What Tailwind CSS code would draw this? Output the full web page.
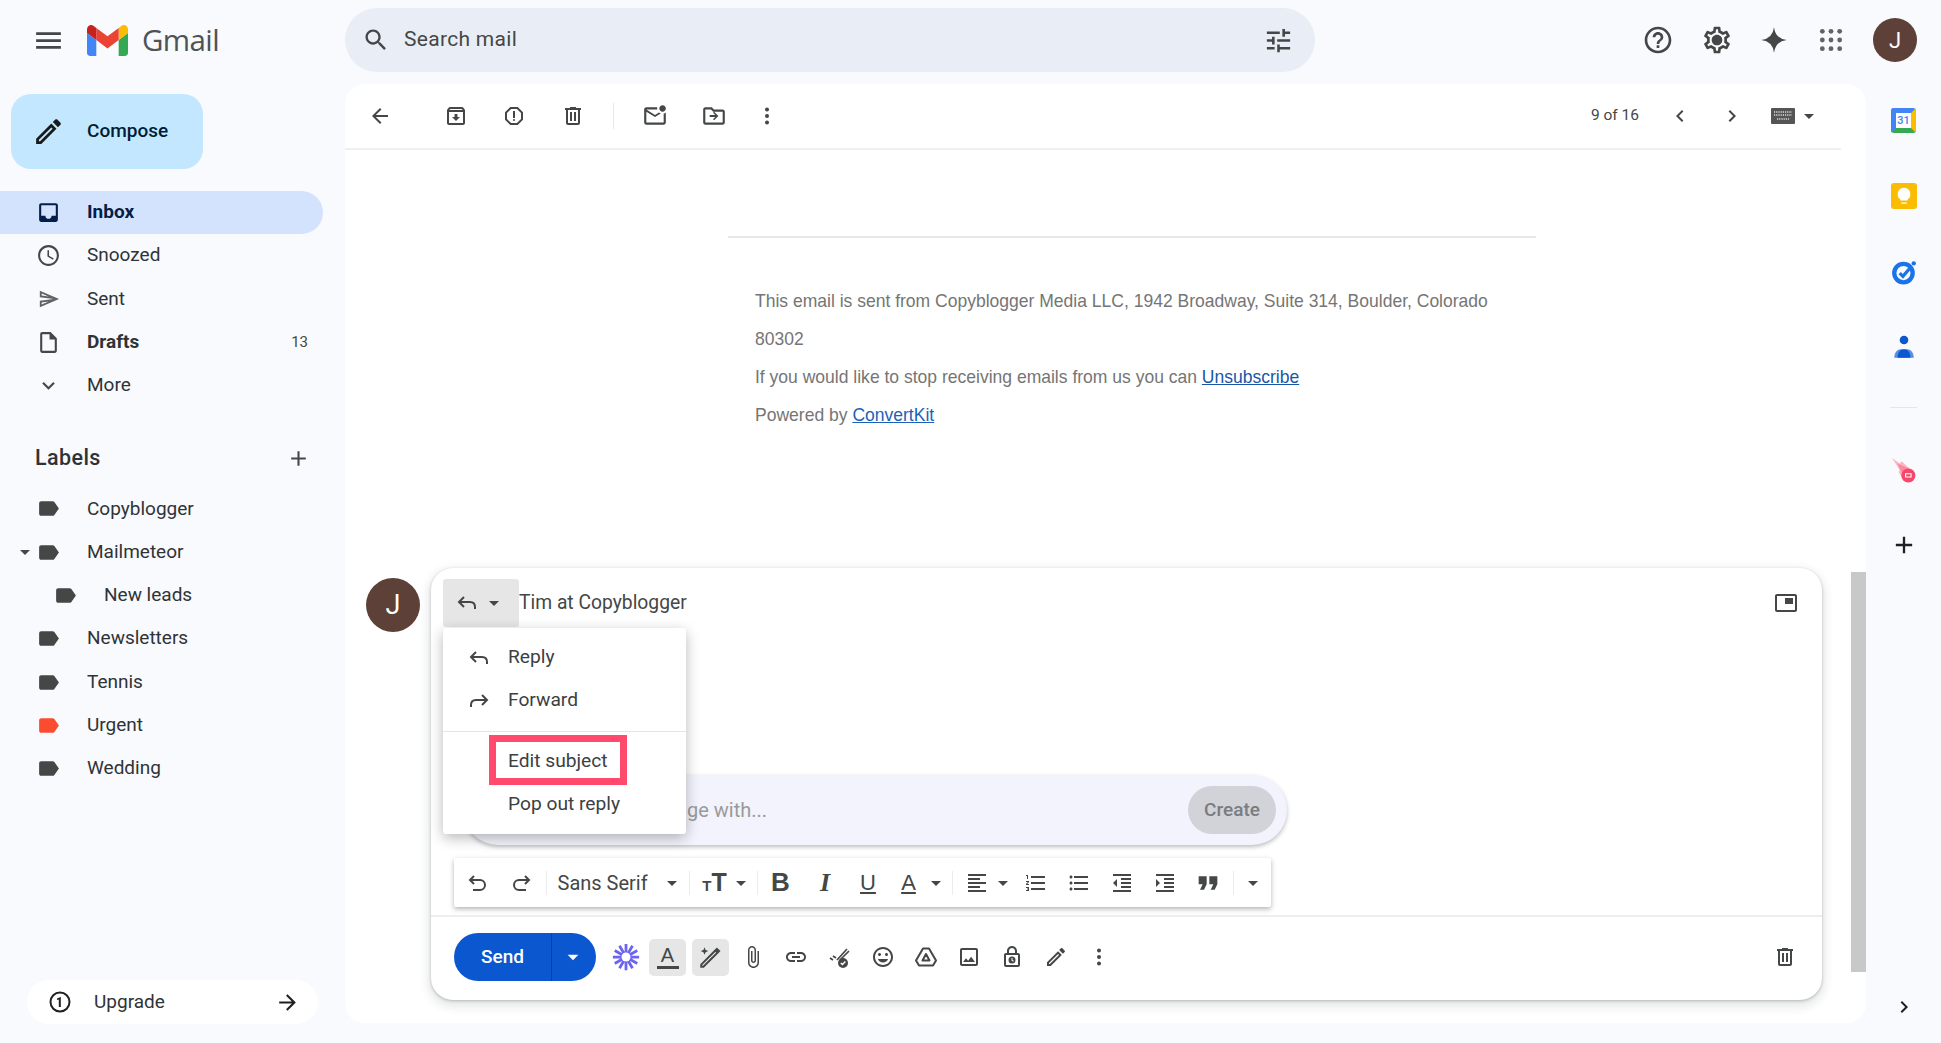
<!DOCTYPE html>
<html lang="en">
  <head>
    <meta charset="UTF-8" />
    <title>Gmail</title>
    <script src="https://cdn.jsdelivr.net/npm/@tailwindcss/browser@4"></script>
  </head>
  <body class="bg-[#f8fafd] h-[1043px] w-[1941px] overflow-hidden font-['Roboto',sans-serif] text-[#1f1f1f]">
    <!-- Top bar -->
    <header class="h-[84px] flex items-start">
      <div class="w-[345px] h-[80px] flex items-center">
        <svg viewBox="0 0 24 24" class="w-[33px] h-[33px] ml-[32px] fill-[#444746]"><path d="M3 18h18v-2H3v2zm0-5h18v-2H3v2zm0-7v2h18V6H3z"/></svg>
        <svg viewBox="52 42 88 66" class="w-[41px] h-[31px] ml-[22px]">
          <path fill="#4285f4" d="M58 108h14V74L52 59v43c0 3.32 2.69 6 6 6"/>
          <path fill="#34a853" d="M120 108h14c3.32 0 6-2.69 6-6V59l-20 15"/>
          <path fill="#fbbc04" d="M120 48v26l20-15v-8c0-7.42-8.47-11.65-14.4-7.2"/>
          <path fill="#ea4335" d="M72 74V48l24 18 24-18v26L96 92"/>
          <path fill="#c5221f" d="M52 51v8l20 15V48l-5.6-4.2c-5.94-4.45-14.4-.22-14.4 7.2"/>
        </svg>
        <span class="ml-[14px] text-[29.5px] text-[#4f5256] font-['Open_Sans',sans-serif] tracking-[-0.6px]">Gmail</span>
      </div>
      <!-- Search -->
      <div class="mt-[8px] w-[970px] h-[64px] bg-[#e9eef6] rounded-full flex items-center pl-[17px] pr-[21px]">
        <svg viewBox="0 0 24 24" class="w-[28px] h-[28px] fill-[#444746]"><path d="M15.5 14h-.79l-.28-.27C15.41 12.59 16 11.11 16 9.5 16 5.91 13.09 3 9.5 3S3 5.91 3 9.5 5.91 16 9.5 16c1.61 0 3.09-.59 4.23-1.57l.27.28v.79l5 4.99L20.49 19l-4.99-5zm-6 0C7.01 14 5 11.99 5 9.5S7.01 5 9.5 5 14 7.01 14 9.5 11.99 14 9.5 14z"/></svg>
        <span class="ml-[14px] text-[21px] text-[#444746] tracking-[0.3px]">Search mail</span>
        <svg viewBox="0 0 24 24" class="ml-auto w-[31px] h-[31px] fill-[#444746]"><path d="M3 17v2h6v-2H3zM3 5v2h10V5H3zm10 16v-2h8v-2h-8v-2h-2v6h2zM7 9v2H3v2h4v2h2V9H7zm14 4v-2H11v2h10zm-6-4h2V7h4V5h-4V3h-2v6z"/></svg>
      </div>
      <!-- Right icons -->
      <div class="h-[80px] flex items-center">
        <svg viewBox="0 0 24 24" class="ml-[327px] w-[32px] h-[32px] fill-[#444746]"><path d="M11 18h2v-2h-2v2zm1-16C6.48 2 2 6.48 2 12s4.48 10 10 10 10-4.48 10-10S17.52 2 12 2zm0 18c-4.41 0-8-3.59-8-8s3.59-8 8-8 8 3.59 8 8-3.59 8-8 8zm0-14c-2.21 0-4 1.79-4 4h2c0-1.1.9-2 2-2s2 .9 2 2c0 2-3 1.75-3 5h2c0-2.25 3-2.5 3-5 0-2.21-1.79-4-4-4z"/></svg>
        <svg viewBox="0 0 24 24" class="ml-[27px] w-[32px] h-[32px] fill-[#444746]"><path d="M19.43 12.98c.04-.32.07-.64.07-.98 0-.34-.03-.66-.07-.98l2.11-1.65c.19-.15.24-.42.12-.64l-2-3.46c-.09-.16-.26-.25-.44-.25-.06 0-.12.01-.17.03l-2.49 1c-.52-.4-1.08-.73-1.69-.98l-.38-2.65C14.46 2.18 14.25 2 14 2h-4c-.25 0-.46.18-.49.42l-.38 2.65c-.61.25-1.17.59-1.69.98l-2.49-1c-.06-.02-.12-.03-.18-.03-.17 0-.34.09-.43.25l-2 3.46c-.13.22-.07.49.12.64l2.11 1.65c-.04.32-.07.65-.07.98 0 .33.03.66.07.98l-2.11 1.65c-.19.15-.24.42-.12.64l2 3.46c.09.16.26.25.44.25.06 0 .12-.01.17-.03l2.49-1c.52.4 1.08.73 1.69.98l.38 2.65c.03.24.24.42.49.42h4c.25 0 .46-.18.49-.42l.38-2.65c.61-.25 1.17-.59 1.69-.98l2.49 1c.06.02.12.03.18.03.17 0 .34-.09.43-.25l2-3.46c.12-.22.07-.49-.12-.64l-2.11-1.65zm-1.98-1.71c.04.31.05.52.05.73 0 .21-.02.43-.05.73l-.14 1.13.89.7 1.08.84-.7 1.21-1.27-.51-1.04-.42-.9.68c-.43.32-.84.56-1.25.73l-1.06.43-.16 1.13-.2 1.35h-1.4l-.19-1.35-.16-1.13-1.06-.43c-.43-.18-.83-.41-1.23-.71l-.91-.7-1.06.43-1.27.51-.7-1.21 1.08-.84.89-.7-.14-1.13c-.03-.31-.05-.54-.05-.74s.02-.43.05-.73l.14-1.13-.89-.7-1.08-.84.7-1.21 1.27.51 1.04.42.9-.68c.43-.32.84-.56 1.25-.73l1.06-.43.16-1.13.2-1.35h1.39l.19 1.35.16 1.13 1.06.43c.43.18.83.41 1.23.71l.91.7 1.06-.43 1.27-.51.7 1.21-1.07.85-.89.7.14 1.13zM12 8c-2.21 0-4 1.79-4 4s1.79 4 4 4 4-1.79 4-4-1.79-4-4-4z"/></svg>
        <svg viewBox="0 0 24 24" class="ml-[25px] w-[32px] h-[32px] fill-[#444746]"><path d="M12 2.5Q13 11 21.5 12 13 13 12 21.5 11 13 2.5 12 11 11 12 2.5z"/></svg>
        <svg viewBox="0 0 24 24" class="ml-[25px] w-[32px] h-[32px] fill-[#5f6368]"><circle cx="5.5" cy="5.500" r="1.8"/><circle cx="12" cy="5.500" r="1.8"/><circle cx="18.5" cy="5.500" r="1.8"/><circle cx="5.5" cy="12" r="1.8"/><circle cx="12" cy="12" r="1.8"/><circle cx="18.5" cy="12" r="1.8"/><circle cx="5.5" cy="18.5" r="1.8"/><circle cx="12" cy="18.5" r="1.8"/><circle cx="18.5" cy="18.5" r="1.8"/></svg>
        <div class="ml-[26px] w-[44px] h-[44px] rounded-full bg-[#5d4037] text-white text-[22px] flex items-center justify-center">J</div>
      </div>
    </header>

    <div class="flex h-[959px]">
      <!-- Sidebar -->
      <aside class="w-[345px] h-full flex flex-col pb-[19px] text-[19px]">
        <button class="ml-[11px] mt-[10px] w-[192px] h-[75px] rounded-[20px] bg-[#c2e7ff] flex items-center pl-[20.5px] text-[#001d35] font-medium">
          <svg viewBox="0 0 24 24" class="w-[33px] h-[33px] fill-[#1a1a1a]"><path d="M3 17.25V21h3.75L17.81 9.94l-3.75-3.75L3 17.25zM5.92 19H5v-.92l9.06-9.06.92.92L5.92 19zM20.71 7.04c.39-.39.39-1.02 0-1.41l-2.34-2.34c-.2-.2-.45-.29-.71-.29s-.51.09-.7.29l-1.83 1.83 3.75 3.75 1.83-1.83z"/></svg>
          <span class="ml-[22.5px]">Compose</span>
        </button>
        <nav class="mt-[22px]">
          <a class="h-[43px] w-[323px] rounded-r-full bg-[#d3e3fd] flex items-center pl-[36px] font-bold text-[#041e49]">
            <svg viewBox="0 0 24 24" class="w-[25px] h-[25px] fill-[#041e49]"><path d="M19 3H4.99C3.88 3 3.01 3.89 3.01 5L3 19c0 1.1.88 2 1.99 2H19c1.1 0 2-.9 2-2V5c0-1.11-.9-2-2-2zm0 12h-4c0 1.66-1.35 3-3 3s-3-1.34-3-3H4.99V5H19v10z"/></svg>
            <span class="ml-[26px]">Inbox</span>
          </a>
          <a class="h-[43.3px] flex items-center pl-[36px] text-[#303336]">
            <svg viewBox="0 0 24 24" class="w-[25px] h-[25px] fill-[#444746]"><path d="M11.99 2C6.47 2 2 6.48 2 12s4.47 10 9.99 10C17.52 22 22 17.52 22 12S17.52 2 11.99 2zM12 20c-4.42 0-8-3.58-8-8s3.58-8 8-8 8 3.58 8 8-3.58 8-8 8zm.5-13H11v6l5.25 3.15.75-1.23-4.5-2.67z"/></svg>
            <span class="ml-[26px]">Snoozed</span>
          </a>
          <a class="h-[43.3px] flex items-center pl-[36px] text-[#303336]">
            <svg viewBox="0 0 24 24" class="mx-[1.5px] w-[22px] h-[22px] fill-[#5f6368]"><path d="M4.01 6.03l7.51 3.22-7.52-1 .01-2.22m7.5 8.72L4 17.97v-2.22l7.51-1M2.01 3L2 10l15 2-15 2 .01 7L23 12 2.01 3z"/></svg>
            <span class="ml-[26px]">Sent</span>
          </a>
          <a class="h-[43.3px] flex items-center pl-[36px] pr-[37px] font-bold text-[#303336]">
            <svg viewBox="0 0 24 24" class="w-[25px] h-[25px] fill-[#444746]"><path d="M14 2H6c-1.1 0-1.99.9-1.99 2L4 20c0 1.1.89 2 1.99 2H18c1.1 0 2-.9 2-2V8l-6-6zM6 20V4h7v5h5v11H6z"/></svg>
            <span class="ml-[26px]">Drafts</span>
            <span class="ml-auto text-[15px] font-normal text-[#444746]">13</span>
          </a>
          <a class="h-[43.3px] flex items-center pl-[36px] text-[#303336]">
            <svg viewBox="0 0 24 24" class="w-[25px] h-[25px] fill-[#444746]"><path d="M16.59 8.59L12 13.17 7.41 8.59 6 10l6 6 6-6z"/></svg>
            <span class="ml-[26px]">More</span>
          </a>
        </nav>

        <div class="mt-[36px] h-[30px] flex items-center pl-[35px] pr-[34px]">
          <span class="text-[21.5px] font-medium text-[#303336] tracking-[0.4px]">Labels</span>
          <svg viewBox="0 0 24 24" class="ml-auto w-[25px] h-[25px] fill-[#444746]"><path d="M19 13h-6v6h-2v-6H5v-2h6V5h2v6h6v2z"/></svg>
        </div>

        <ul class="mt-[14px] text-[#303336]">
          <li class="h-[43.3px] flex items-center pl-[36px]">
            <svg viewBox="0 0 24 24" class="w-[25px] h-[25px] fill-[#444746]"><path d="M17.63 5.84C17.27 5.33 16.67 5 16 5L5 5.01C3.9 5.01 3 5.9 3 7v10c0 1.1.9 1.99 2 1.99L16 19c.67 0 1.27-.33 1.63-.84L22 12l-4.37-6.16z"/></svg>
            <span class="ml-[26px]">Copyblogger</span>
          </li>
          <li class="h-[43.3px] flex items-center pl-[36px]">
            <svg viewBox="0 0 24 24" class="-ml-[23px] -mr-[1px] w-[24px] h-[24px] fill-[#444746]"><path d="M7 10l5 5 5-5z"/></svg>
            <svg viewBox="0 0 24 24" class="w-[25px] h-[25px] fill-[#444746]"><path d="M17.63 5.84C17.27 5.33 16.67 5 16 5L5 5.01C3.9 5.01 3 5.9 3 7v10c0 1.1.9 1.99 2 1.99L16 19c.67 0 1.27-.33 1.63-.84L22 12l-4.37-6.16z"/></svg>
            <span class="ml-[26px]">Mailmeteor</span>
          </li>
          <li class="h-[43.3px] flex items-center pl-[53px]">
            <svg viewBox="0 0 24 24" class="w-[25px] h-[25px] fill-[#444746]"><path d="M17.63 5.84C17.27 5.33 16.67 5 16 5L5 5.01C3.9 5.01 3 5.9 3 7v10c0 1.1.9 1.99 2 1.99L16 19c.67 0 1.27-.33 1.63-.84L22 12l-4.37-6.16z"/></svg>
            <span class="ml-[26px]">New leads</span>
          </li>
          <li class="h-[43.3px] flex items-center pl-[36px]">
            <svg viewBox="0 0 24 24" class="w-[25px] h-[25px] fill-[#444746]"><path d="M17.63 5.84C17.27 5.33 16.67 5 16 5L5 5.01C3.9 5.01 3 5.9 3 7v10c0 1.1.9 1.99 2 1.99L16 19c.67 0 1.27-.33 1.63-.84L22 12l-4.37-6.16z"/></svg>
            <span class="ml-[26px]">Newsletters</span>
          </li>
          <li class="h-[43.3px] flex items-center pl-[36px]">
            <svg viewBox="0 0 24 24" class="w-[25px] h-[25px] fill-[#444746]"><path d="M17.63 5.84C17.27 5.33 16.67 5 16 5L5 5.01C3.9 5.01 3 5.9 3 7v10c0 1.1.9 1.99 2 1.99L16 19c.67 0 1.27-.33 1.63-.84L22 12l-4.37-6.16z"/></svg>
            <span class="ml-[26px]">Tennis</span>
          </li>
          <li class="h-[43.3px] flex items-center pl-[36px]">
            <svg viewBox="0 0 24 24" class="w-[25px] h-[25px] fill-[#fb4c2f]"><path d="M17.63 5.84C17.27 5.33 16.67 5 16 5L5 5.01C3.9 5.01 3 5.9 3 7v10c0 1.1.9 1.99 2 1.99L16 19c.67 0 1.27-.33 1.63-.84L22 12l-4.37-6.16z"/></svg>
            <span class="ml-[26px]">Urgent</span>
          </li>
          <li class="h-[43.3px] flex items-center pl-[36px]">
            <svg viewBox="0 0 24 24" class="w-[25px] h-[25px] fill-[#444746]"><path d="M17.63 5.84C17.27 5.33 16.67 5 16 5L5 5.01C3.9 5.01 3 5.9 3 7v10c0 1.1.9 1.99 2 1.99L16 19c.67 0 1.27-.33 1.63-.84L22 12l-4.37-6.16z"/></svg>
            <span class="ml-[26px]">Wedding</span>
          </li>
        </ul>

        <div class="mt-auto ml-[27px] w-[291px] h-[44px] rounded-full bg-white flex items-center pl-[21px] pr-[18px] text-[#303336]">
          <svg viewBox="0 0 24 24" class="w-[24px] h-[24px]"><circle cx="12" cy="12" r="9.500" fill="none" stroke="#1f1f1f" stroke-width="2"/><path d="M12.800 7v10h-2v-7.600l-1.800.6V8.400L12.600 7z" fill="#1f1f1f"/></svg>
          <span class="ml-[22px]">Upgrade</span>
          <svg viewBox="0 0 24 24" class="ml-auto w-[25px] h-[25px] fill-[#1f1f1f]"><path d="M12 4l-1.41 1.41L16.17 11H4v2h12.17l-5.58 5.59L12 20l8-8z"/></svg>
        </div>
      </aside>

      <!-- Main card -->
      <main class="relative w-[1521px] h-[939px] bg-white rounded-[20px] overflow-hidden">
        <div class="h-[66px] mr-[25px] border-b-2 border-[#f0f0f0] flex items-center text-[15.5px] text-[#444746]">
          <svg viewBox="0 0 24 24" class="ml-[23px] w-[24px] h-[24px] fill-[#444746]"><path d="M20 11H7.83l5.59-5.59L12 4l-8 8 8 8 1.41-1.41L7.83 13H20v-2z"/></svg>
          <svg viewBox="0 0 24 24" class="ml-[52px] w-[24px] h-[24px] fill-[#444746]"><path d="M20.54 5.23l-1.39-1.68C18.88 3.21 18.47 3 18 3H6c-.47 0-.88.21-1.16.55L3.46 5.23C3.17 5.57 3 6.02 3 6.5V19c0 1.1.9 2 2 2h14c1.1 0 2-.9 2-2V6.5c0-.48-.17-.93-.46-1.27zM6.24 5h11.52l.81.97H5.44l.8-.97zM5 19V8h14v11H5zm8.45-9h-2.9v3H8l4 4 4-4h-2.55z"/></svg>
          <svg viewBox="0 0 24 24" class="ml-[34px] w-[24px] h-[24px] fill-[#444746]"><path d="M15.73 3H8.27L3 8.27v7.46L8.27 21h7.46L21 15.73V8.27L15.73 3zM19 14.9L14.9 19H9.1L5 14.9V9.1L9.1 5h5.8L19 9.1v5.8z"/><circle cx="12" cy="16" r="1"/><rect x="11" y="7" width="2" height="7"/></svg>
          <svg viewBox="0 0 24 24" class="ml-[35px] w-[24px] h-[24px] fill-[#444746]"><path d="M15 4V3H9v1H4v2h1v13c0 1.1.9 2 2 2h10c1.1 0 2-.9 2-2V6h1V4h-5zm2 15H7V6h10v13zM9 8h2v9H9zm4 0h2v9h-2z"/></svg>
          <div class="ml-[28px] w-px h-[26px] bg-[#e8e8e8]"></div>
          <svg viewBox="0 0 24 24" class="ml-[28px] w-[26px] h-[26px] fill-[#444746]"><path d="M22 8.98V18c0 1.1-.9 2-2 2H4c-1.1 0-2-.9-2-2V6c0-1.1.9-2 2-2h10.1c-.06.32-.1.66-.1 1 0 .34.04.68.1 1H4l8 5 3.67-2.29c.47.43 1.02.76 1.63.98L12 13 4 8v10h16V9.9c.74-.15 1.42-.48 2-.92zM16 5c0 1.66 1.34 3 3 3s3-1.34 3-3-1.34-3-3-3-3 1.34-3 3z"/></svg>
          <svg viewBox="0 0 24 24" class="ml-[33px] w-[26px] h-[26px] fill-[#444746]"><path d="M20 6h-8l-2-2H4c-1.1 0-1.99.9-1.99 2L2 18c0 1.1.9 2 2 2h16c1.1 0 2-.9 2-2V8c0-1.1-.9-2-2-2zm0 12H4V6h5.17l2 2H20v10zm-7.84-2L16 12l-3.84-4-1.06 1.06L13.17 11H8v2h5.17l-2.07 1.94z"/></svg>
          <svg viewBox="0 0 24 24" class="ml-[28px] w-[24px] h-[24px] fill-[#444746]"><circle cx="12" cy="5.500" r="2"/><circle cx="12" cy="12" r="2"/><circle cx="12" cy="18.500" r="2"/></svg>
          <span class="ml-auto">9 of 16</span>
          <svg viewBox="0 0 24 24" class="ml-[29px] w-[24px] h-[24px] fill-[#444746]"><path d="M15.41 7.41 14 6l-6 6 6 6 1.41-1.41L10.83 12z"/></svg>
          <svg viewBox="0 0 24 24" class="ml-[28px] w-[24px] h-[24px] fill-[#444746]"><path d="M10 6 8.59 7.41 13.17 12l-4.58 4.59L10 18l6-6z"/></svg>
          <svg viewBox="0 0 26 16" class="ml-[26px] w-[26px] h-[16px]"><rect width="24" height="16" rx="1" x="1" fill="#555"/><path d="M4 4h18M4 7h18M7 11h12" stroke="#ddd" stroke-width="1.4" stroke-dasharray="1.2 1"/></svg>
          <svg viewBox="0 0 24 24" class="ml-[1px] mr-[20px] w-[24px] h-[24px] fill-[#444746]"><path d="M7 10l5 5 5-5z"/></svg>
        </div>

        <!-- Mail footer -->
        <div class="h-[418px] font-['Liberation_Sans',sans-serif] text-[17.52px] text-[#757575]">
          <div class="ml-[383px] w-[808px] pt-[86px] border-b-2 border-[#e8e8e8]"></div>
          <div class="ml-[410px] pt-[44px] leading-[38px]">
            <p>This email is sent from Copyblogger Media LLC, 1942 Broadway, Suite 314, Boulder, Colorado</p>
            <p>80302</p>
            <p>If you would like to stop receiving emails from us you can <a class="text-[#1a56a8] underline">Unsubscribe</a></p>
            <p>Powered by <a class="text-[#1a62b8] underline">ConvertKit</a></p>
          </div>
        </div>

        <!-- Reply -->
        <div class="flex items-start pl-[21px]">
          <div class="mt-[10px] w-[54px] h-[54px] rounded-full bg-[#5d4037] text-white text-[27px] flex items-center justify-center">J</div>
          <div class="relative ml-[11px] w-[1391px] h-[432px] bg-white rounded-[22px] shadow-[0_1px_3px_rgba(60,64,67,0.3),0_4px_10px_3px_rgba(60,64,67,0.12)] flex flex-col">
            <div class="h-[349px] border-b-2 border-[#eeeeee]">
              <div class="flex items-start pl-[12px] pr-[24px] pt-[11px] h-[59px]">
                <div class="w-[76px] h-[48px] bg-[#e6e6e6] rounded-[3px] flex items-center pl-[12px]">
                  <svg viewBox="0 0 24 24" class="w-[24px] h-[24px] fill-none stroke-[#444746] stroke-2"><path d="M9 6 4 11l5 5M4 11h11q5 0 5 5v2"/></svg>
                  <svg viewBox="0 0 24 24" class="w-[24px] h-[24px] ml-[3px] fill-[#444746]"><path d="M7 10l5 5 5-5z"/></svg>
                </div>
                <span class="h-[48px] leading-[48px] text-[19.3px] text-[#444746]">Tim at Copyblogger</span>
                <svg viewBox="0 0 24 24" class="ml-auto w-[24px] h-[48px] fill-[#444746]"><path d="M19 7h-8v6h8V7zm2-4H3c-1.1 0-2 .9-2 2v14c0 1.1.9 2 2 2h18c1.1 0 2-.9 2-2V5c0-1.1-.9-2-2-2zm0 16.01H3V4.98h18v14.03z"/></svg>
              </div>

              <!-- Prompt bar -->
              <div class="mt-[148px] ml-[32px] w-[824px] h-[70px] rounded-[35px] bg-[#f2f3fc] shadow-[0_2px_4px_rgba(60,64,67,0.35)] flex items-center pr-[11px] text-[20px] text-[#9a9a9a]">
                <span class="pl-[224px]">ge with...</span>
                <button class="ml-auto w-[88px] h-[48px] rounded-full bg-[#d1d3d9] text-[19px] font-medium text-[#7a7c80]">Create</button>
              </div>

              <!-- Format toolbar -->
              <div class="mt-[13px] ml-[23px] w-[817px] h-[49px] bg-white rounded-[2px] shadow-[0_2px_5px_rgba(60,64,67,0.4)] flex items-center text-[#444746]">
                <svg viewBox="0 0 24 24" class="ml-[11px] mr-[9.5px] w-[24px] h-[24px] fill-none stroke-[#444746] stroke-2"><path d="M9 5 5 9l4 4M5 9h10a5 5 0 0 1 0 10H8"/></svg>
                <svg viewBox="0 0 24 24" class="ml-[11px] mr-[9px] w-[24px] h-[24px] fill-none stroke-[#444746] stroke-2"><path d="m15 5 4 4-4 4m4-4H9a5 5 0 0 0 0 10h7"/></svg>
                <div class="ml-[3px] w-px h-[24px] bg-[#ececec]"></div>
                <span class="ml-[11px] w-[102px] text-[20px]">Sans Serif</span>
                <svg viewBox="0 0 24 24" class="w-[24px] h-[24px] fill-[#444746]"><path d="M7 10l5 5 5-5z"/></svg>
                <div class="ml-[5px] w-px h-[24px] bg-[#ececec]"></div>
                <span class="w-[38px] ml-[6px] text-center font-bold font-['Liberation_Sans',sans-serif] text-[25px] leading-none"><span class="text-[15px]">T</span>T</span>
                <svg viewBox="0 0 24 24" class="-ml-[5px] -mr-[5px] w-[24px] h-[24px] fill-[#444746]"><path d="M7 10l5 5 5-5z"/></svg>
                <div class="ml-[9px] w-px h-[24px] bg-[#ececec]"></div>
                <span class="w-[46px] text-center font-bold font-['Liberation_Sans',sans-serif] text-[26px]">B</span>
                <span class="w-[43px] text-center italic font-bold font-['Liberation_Serif',serif] text-[26px]">I</span>
                <span class="w-[43px] text-center font-['Liberation_Sans',sans-serif] text-[22px] underline underline-offset-2 decoration-2">U</span>
                <span class="w-[38px] text-center font-['Liberation_Sans',sans-serif] text-[22px] underline underline-offset-2 decoration-2">A</span>
                <svg viewBox="0 0 24 24" class="-mx-[4px] w-[24px] h-[24px] fill-[#444746]"><path d="M7 10l5 5 5-5z"/></svg>
                <div class="ml-[8px] w-px h-[24px] bg-[#ececec]"></div>
                <svg viewBox="0 0 24 24" class="ml-[12px] mr-[6px] w-[24px] h-[24px] fill-[#444746]"><path d="M15 15H3v2h12v-2zm0-8H3v2h12V7zM3 13h18v-2H3v2zm0 8h18v-2H3v2zM3 3v2h18V3H3z"/></svg>
                <svg viewBox="0 0 24 24" class="-mx-[4px] w-[24px] h-[24px] fill-[#444746]"><path d="M7 10l5 5 5-5z"/></svg>
                <svg viewBox="0 0 24 24" class="ml-[13.5px] mr-[9.5px] w-[24px] h-[24px] fill-[#444746]"><path d="M2 17h2v.5H3v1h1v.5H2v1h3v-4H2v1zm1-9h1V4H2v1h1v3zm-1 3h1.8L2 13.1v.9h3v-1H3.2L5 10.9V10H2v1zm5-6v2h14V5H7zm0 14h14v-2H7v2zm0-6h14v-2H7v2z"/></svg>
                <svg viewBox="0 0 24 24" class="mx-[9.5px] w-[24px] h-[24px] fill-[#444746]"><path d="M4 10.5c-.83 0-1.5.67-1.5 1.5s.67 1.5 1.5 1.5 1.5-.67 1.5-1.5-.67-1.5-1.5-1.5zm0-6c-.83 0-1.5.67-1.5 1.5S3.17 7.5 4 7.5 5.5 6.83 5.5 6 4.83 4.5 4 4.5zm0 12c-.83 0-1.5.68-1.5 1.5s.68 1.5 1.5 1.5 1.5-.68 1.5-1.5-.67-1.5-1.5-1.5zM7 19h14v-2H7v2zm0-6h14v-2H7v2zm0-8v2h14V5H7z"/></svg>
                <svg viewBox="0 0 24 24" class="mx-[9.5px] w-[24px] h-[24px] fill-[#444746]"><path d="M11 17h10v-2H11v2zm-8-5l4 4V8l-4 4zm0 9h18v-2H3v2zM3 3v2h18V3H3zm8 6h10V7H11v2zm0 4h10v-2H11v2z"/></svg>
                <svg viewBox="0 0 24 24" class="mx-[9.5px] w-[24px] h-[24px] fill-[#444746]"><path d="M3 21h18v-2H3v2zM3 8v8l4-4-4-4zm8 9h10v-2H11v2zM3 3v2h18V3H3zm8 6h10V7H11v2zm0 4h10v-2H11v2z"/></svg>
                <svg viewBox="0 0 24 24" class="mx-[5.5px] w-[32px] h-[32px] fill-[#444746]"><path d="M6 17h3l2-4V7H5v6h3zm8 0h3l2-4V7h-6v6h3z"/></svg>
                <div class="ml-[3px] w-px h-[24px] bg-[#ececec]"></div>
                <svg viewBox="0 0 24 24" class="ml-[7px] w-[24px] h-[24px] fill-[#444746]"><path d="M7 10l5 5 5-5z"/></svg>
              </div>
            </div>

            <!-- Send row -->
            <div class="flex-1 flex items-center pl-[23px] pr-[25px] pb-[3px]">
              <div class="w-[142px] h-[48px] rounded-full bg-[#0b57d0] flex items-center text-white">
                <span class="w-[97px] text-center text-[19px] font-medium">Send</span>
                <div class="w-px h-[48px] bg-[#0842a0]"></div>
                <svg viewBox="0 0 24 24" class="ml-[8px] w-[26px] h-[26px] fill-white"><path d="M7 10l5 5 5-5z"/></svg>
              </div>
              <svg viewBox="0 0 24 24" class="ml-[15px] w-[30px] h-[30px] stroke-[#6c63f0] stroke-[2.2]"><path d="M12 1.500v21M1.500 12h21M3 6.800l18 10.400M3 17.200 21 6.800M6.800 3l10.400 18M17.200 3 6.800 21"/><circle cx="12" cy="12" r="3.600" fill="#fff" stroke="none"/></svg>
              <div class="ml-[8px] w-[37px] h-[37px] rounded-[5px] bg-[#e6e6e6] flex flex-col items-center justify-center">
                <span class="font-['Liberation_Sans',sans-serif] text-[20px] leading-[21px] text-[#444746]">A</span>
                <div class="w-[22px] h-[3px] bg-[#444746]"></div>
              </div>
              <div class="ml-[6px] w-[37px] h-[37px] rounded-[5px] bg-[#e6e6e6] flex items-center justify-center">
                <svg viewBox="0 0 24 24" class="w-[26px] h-[26px]"><path d="M5 21 3 21 3 19 16 6 18 8zM17.500 4.500l2 2-1 1-2-2z" fill="none" stroke="#444746" stroke-width="1.800"/><path d="M6 3l1 2.500L9.500 6.500 7 7.500 6 10 5 7.500 2.500 6.500 5 5.500z" fill="#444746"/></svg>
              </div>
              <svg viewBox="0 0 24 24" class="ml-[12px] mr-[9.8px] w-[24px] h-[24px] fill-[#444746]"><path d="M16.500 6v11.500c0 2.210-1.790 4-4 4s-4-1.790-4-4V5c0-1.380 1.120-2.500 2.500-2.500s2.500 1.120 2.500 2.500v10.500c0 .55-.45 1-1 1s-1-.45-1-1V6H10v9.500c0 1.380 1.120 2.500 2.500 2.500s2.500-1.120 2.500-2.500V5c0-2.210-1.790-4-4-4S7 2.790 7 5v12.500c0 3.040 2.460 5.500 5.500 5.500s5.500-2.460 5.500-5.500V6h-1.500z"/></svg>
              <svg viewBox="0 0 24 24" class="mx-[9.6px] w-[24px] h-[24px] fill-[#444746]"><path d="M3.900 12c0-1.710 1.390-3.100 3.100-3.100h4V7H7c-2.760 0-5 2.240-5 5s2.240 5 5 5h4v-1.900H7c-1.710 0-3.100-1.390-3.100-3.100zM8 13h8v-2H8v2zm9-6h-4v1.900h4c1.710 0 3.100 1.390 3.100 3.100s-1.390 3.100-3.100 3.100h-4V17h4c2.760 0 5-2.240 5-5s-2.240-5-5-5z"/></svg>
              <svg viewBox="0 0 24 24" class="mx-[9.6px] w-[24px] h-[24px]"><path d="M2 13l3 2M5 11l3 2M9 15l10-11M12 15l9-9" fill="none" stroke="#444746" stroke-width="1.700"/><circle cx="15" cy="18" r="5" fill="#444746"/><path d="M12.800 18l1.600 1.600 3-3" fill="none" stroke="#fff" stroke-width="1.400"/></svg>
              <svg viewBox="0 0 24 24" class="mx-[9.6px] w-[24px] h-[24px] fill-[#444746]"><path d="M11.990 2C6.470 2 2 6.480 2 12s4.470 10 9.990 10C17.520 22 22 17.520 22 12S17.520 2 11.990 2zM12 20c-4.420 0-8-3.580-8-8s3.580-8 8-8 8 3.580 8 8-3.580 8-8 8zm3.500-9c.83 0 1.500-.67 1.500-1.500S16.330 8 15.500 8 14 8.670 14 9.500s.67 1.500 1.500 1.500zm-7 0c.83 0 1.500-.67 1.500-1.500S9.330 8 8.500 8 7 8.670 7 9.500 7.670 11 8.500 11zm3.500 6.500c2.330 0 4.310-1.460 5.110-3.500H6.890c.8 2.040 2.780 3.500 5.110 3.500z"/></svg>
              <svg viewBox="0 0 24 24" class="mx-[9.6px] w-[24px] h-[24px] fill-none stroke-[#444746] stroke-2 [stroke-linejoin:round]"><path d="M9 3.500h6L22 15.500l-3 5H5l-3-5zM12 9l-3.500 6.500h7z"/></svg>
              <svg viewBox="0 0 24 24" class="mx-[9.6px] w-[24px] h-[24px] fill-[#444746]"><path d="M19 5v14H5V5h14m0-2H5c-1.100 0-2 .9-2 2v14c0 1.100.9 2 2 2h14c1.100 0 2-.9 2-2V5c0-1.100-.9-2-2-2zm-4.860 8.860l-3 3.870L9 13.140 6 17h12l-3.860-5.140z"/></svg>
              <svg viewBox="0 0 24 24" class="mx-[9.6px] w-[24px] h-[24px] fill-[#444746]"><path d="M18 8h-1V6c0-2.760-2.240-5-5-5S7 3.240 7 6v2H6c-1.100 0-2 .9-2 2v10c0 1.100.9 2 2 2h12c1.100 0 2-.9 2-2V10c0-1.100-.9-2-2-2zM9 6c0-1.660 1.340-3 3-3s3 1.340 3 3v2H9V6zm9 14H6V10h12v10z"/><path d="M12 11.500a3.500 3.500 0 1 0 0 7 3.500 3.500 0 0 0 0-7zm1.300 5.200-1.800-1.100V13h1v2l1.300.8z"/></svg>
              <svg viewBox="0 0 24 24" class="mx-[9.6px] w-[24px] h-[24px] fill-[#444746]"><path d="M3 17.250V21h3.750L17.810 9.940l-3.750-3.750L3 17.250zM5.920 19H5v-.92l9.060-9.060.92.92L5.920 19zM20.710 7.040c.39-.39.39-1.020 0-1.410l-2.340-2.340c-.2-.2-.45-.29-.71-.29s-.51.09-.7.29l-1.830 1.830 3.750 3.750 1.830-1.830z"/></svg>
              <svg viewBox="0 0 24 24" class="mx-[9.6px] w-[24px] h-[24px] fill-[#444746]"><circle cx="12" cy="5.500" r="2"/><circle cx="12" cy="12" r="2"/><circle cx="12" cy="18.500" r="2"/></svg>
              <svg viewBox="0 0 24 24" class="ml-auto w-[24px] h-[24px] fill-[#444746]"><path d="M15 4V3H9v1H4v2h1v13c0 1.100.9 2 2 2h10c1.100 0 2-.9 2-2V6h1V4h-5zm2 15H7V6h10v13zM9 8h2v9H9zm4 0h2v9h-2z"/></svg>
            </div>

            <!-- Reply type menu -->
            <div class="absolute z-10 left-[12px] top-[60px] w-[243px] h-[206px] bg-white rounded-[3px] shadow-[0_4px_14px_rgba(0,0,0,0.28)] pt-[8px] text-[19.2px] text-[#3c4043]">
              <div class="h-[43px] flex items-center pl-[24px]">
                <svg viewBox="0 0 24 24" class="w-[24px] h-[24px] fill-none stroke-[#444746] stroke-2"><path d="M9 6 4 11l5 5M4 11h11q5 0 5 5v2"/></svg>
                <span class="ml-[17px]">Reply</span>
              </div>
              <div class="h-[43px] flex items-center pl-[24px]">
                <svg viewBox="0 0 24 24" class="w-[24px] h-[24px] fill-none stroke-[#444746] stroke-2"><path d="m15 6 5 5-5 5m5-5H9q-5 0-5 5v2"/></svg>
                <span class="ml-[17px]">Forward</span>
              </div>
              <div class="mt-[9px] border-t border-[#e4e4e4]"></div>
              <div class="relative mt-[8px] h-[43px] flex items-center pl-[65px]">
                <span>Edit subject</span>
                <div class="absolute left-[46px] -top-[5px] w-[138px] h-[50px] border-[7px] border-[#ff4a6e]"></div>
              </div>
              <div class="h-[43px] flex items-center pl-[65px]">Pop out reply</div>
            </div>
          </div>
        </div>

        <!-- Scrollbar -->
        <div class="absolute right-0 top-[488px] w-[15px] h-[400px] bg-[#c8c8c8]"></div>
      </main>

      <!-- Right rail -->
      <aside class="flex-1 h-full flex flex-col items-center pt-[24px] pb-[24px]">
        <div class="relative w-[25px] h-[25px] rounded-[3px] bg-white border-[5px] border-t-[#4285f4] border-l-[#4285f4] border-r-[#fbbc04] border-b-[#34a853] flex items-center justify-center">
          <span class="text-[11px] font-medium text-[#4285f4] leading-none">31</span>
        </div>
        <div class="mt-[50px] w-[26px] h-[26px] rounded-[3px] bg-[#fbbc04] flex items-center justify-center">
          <svg viewBox="0 0 24 24" class="w-[22px] h-[22px] fill-white"><path d="M12 3a7 7 0 0 0-4 12.700V17h8v-1.300A7 7 0 0 0 12 3zM9 19h6v1.500H9z"/></svg>
        </div>
        <svg viewBox="0 0 24 24" class="mt-[50px] w-[26px] h-[26px]"><circle cx="11.500" cy="13" r="8.500" fill="none" stroke="#1a73e8" stroke-width="4"/><path d="M8 13l3 3 6-7" fill="none" stroke="#1a73e8" stroke-width="3"/><circle cx="21" cy="4" r="2" fill="#1a73e8"/></svg>
        <svg viewBox="0 0 24 24" class="mt-[49px] w-[26px] h-[26px]"><circle cx="12" cy="5.500" r="4" fill="#0b57d0"/><path d="M3 22c0-5 3-8 6-8h6c3 0 6 3 6 8z" fill="#5a8ee6"/><path d="M6 22c0-5 2.500-8 6-8s6 3 6 8z" fill="#0b57d0"/></svg>
        <div class="mt-[47px] w-[27px] h-px bg-[#e3e5e8]"></div>
        <svg viewBox="0 0 24 24" class="mt-[49px] w-[26px] h-[26px]"><path d="M1 1 8 6 10 4 13 7 20 13 14 22 9 17 7 14 8 12z" fill="#fbb6c4"/><path d="M6 6 13 9 20 13 14 21 9 13z" fill="#f98aa0"/><circle cx="16" cy="17" r="6.500" fill="#f5476a"/><path d="M13.500 15.500h5v3h-5z" fill="none" stroke="#fff" stroke-width="1"/></svg>
        <svg viewBox="0 0 24 24" class="mt-[48px] w-[28px] h-[28px] fill-[#1f1f1f]"><path d="M19 13h-6v6h-2v-6H5v-2h6V5h2v6h6v2z"/></svg>
        <svg viewBox="0 0 24 24" class="mt-auto w-[24px] h-[24px] fill-[#1f1f1f]"><path d="M10 6 8.590 7.410 13.170 12l-4.580 4.590L10 18l6-6z"/></svg>
      </aside>
    </div>
  </body>
</html>
